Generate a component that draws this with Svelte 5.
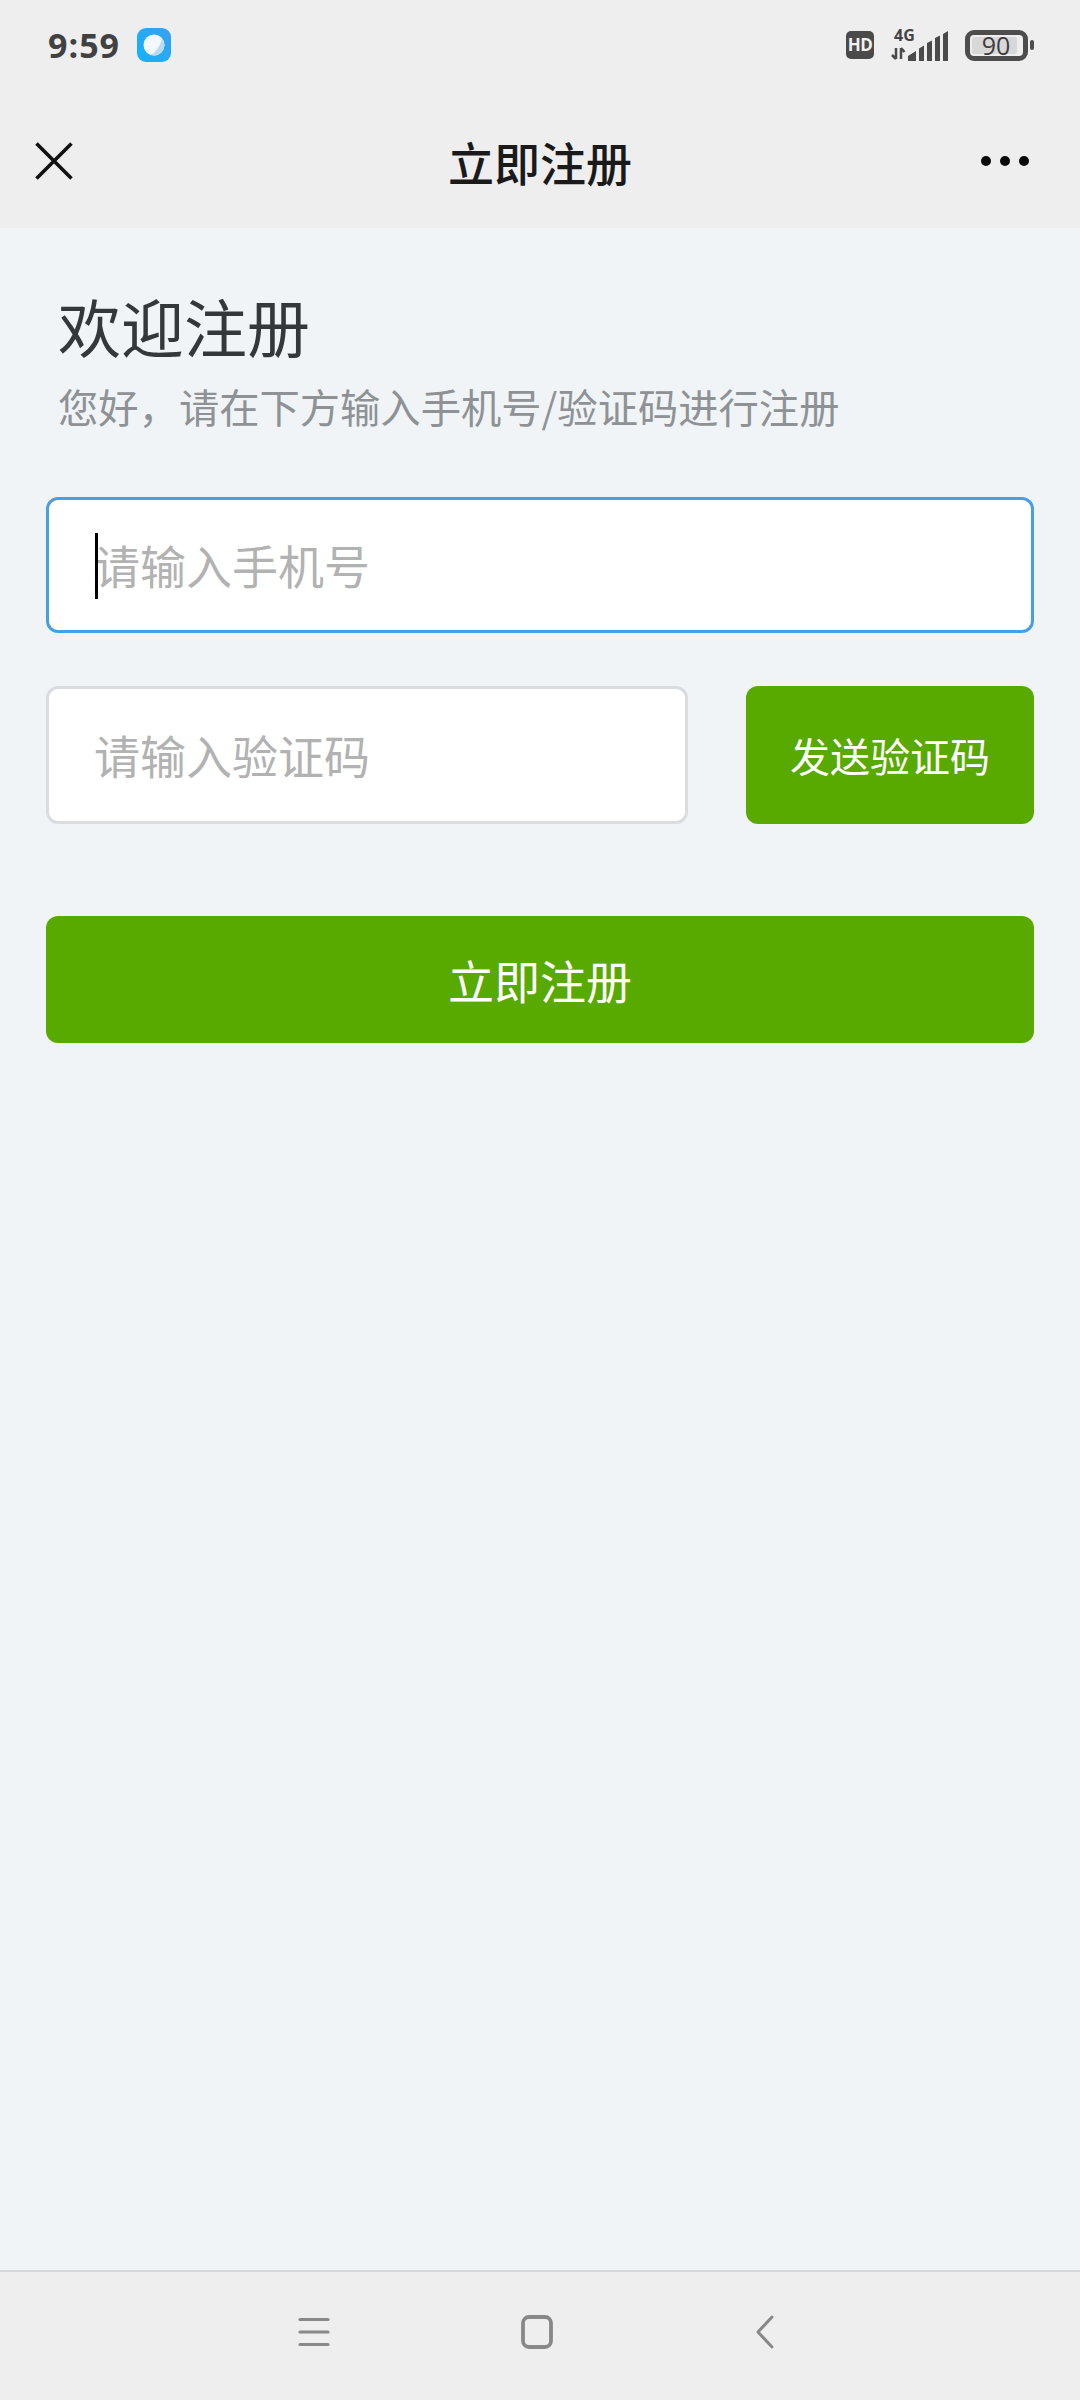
<script>
  const navTitle = '立即注册';
</script>

<div class="page">
  <header class="top">
    <div class="status">
      <div class="status-left">
        <span class="time">9:59</span>
        <svg class="app-icon" width="34" height="34" viewBox="0 0 34 34">
          <defs>
            <linearGradient id="appg" x1="0" y1="1" x2="1" y2="0">
              <stop offset="0" stop-color="#12b4fb" />
              <stop offset="1" stop-color="#3a9fee" />
            </linearGradient>
          </defs>
          <rect width="34" height="34" rx="9" fill="url(#appg)" />
          <circle cx="17" cy="17" r="10.5" fill="#f4f8fc" />
          <path d="M25 10.5 A10.5 10.5 0 0 1 14 27 Q22 22 25 10.5Z" fill="#b9dcf5" />
        </svg>
      </div>
      <div class="status-right">
        <div class="hd">HD</div>
        <div class="net">
          <span class="net-label">4G</span>
          <svg class="net-icon" width="58" height="31" viewBox="0 0 58 31">
            <path d="M5 18v11M5 29l-4-4M10 29V18M10 18l3.500 4" fill="none" stroke="#4a4a4a" stroke-width="2.500" />
            <path d="M17 31v-5l8-5v10zM28 31V18.500l5-3V31zM36 31V13l5-2.500V31zM44 31V8l5-2.500V31zM52 31V4l5-3v30z" fill="#4a4a4a" />
          </svg>
        </div>
        <div class="battery">
          <div class="battery-body"><div class="battery-fill"></div><span class="battery-num">90</span></div>
          <div class="battery-tip"></div>
        </div>
      </div>
    </div>
    <nav class="nav">
      <svg width="38" height="38" viewBox="0 0 38 38">
        <path d="M1.500 1.500L36.500 36.500M36.500 1.500L1.500 36.500" stroke="#111" stroke-width="3.600" fill="none" />
      </svg>
      <h1 class="nav-title">{navTitle}</h1>
      <svg class="more" width="48" height="10" viewBox="0 0 48 10">
        <circle cx="5" cy="5" r="5" fill="#0a0a0a" />
        <circle cx="24" cy="5" r="5" fill="#0a0a0a" />
        <circle cx="43" cy="5" r="5" fill="#0a0a0a" />
      </svg>
    </nav>
  </header>

  <main class="main">
    <h2 class="welcome">欢迎注册</h2>
    <p class="sub">您好，请在下方输入手机号/验证码进行注册</p>

    <div class="field active">
      <span class="caret"></span>
      <input type="text" placeholder="请输入手机号" />
    </div>

    <div class="code-row">
      <div class="field code">
        <input type="text" placeholder="请输入验证码" />
      </div>
      <button class="send">发送验证码</button>
    </div>

    <button class="submit">立即注册</button>
  </main>

  <footer class="bottom">
    <svg class="menu" width="32" height="30" viewBox="0 0 32 30">
      <path d="M2 2.500H30M2 15H30M2 27.500H30" stroke="#888" stroke-width="3.200" stroke-linecap="round" fill="none" />
    </svg>
    <svg class="home" width="32" height="34" viewBox="0 0 32 34">
      <rect x="2" y="2" width="28" height="30" rx="6" stroke="#888" stroke-width="3.800" fill="none" />
    </svg>
    <svg class="back" width="18" height="34" viewBox="0 0 18 34">
      <path d="M16 2L2 17L16 32" stroke="#888" stroke-width="3" stroke-linecap="round" stroke-linejoin="round" fill="none" />
    </svg>
  </footer>
</div>

<style>
  :global(body) {
    margin: 0;
    background: #f0f4f7;
    font-family: "Noto Sans CJK SC", "Noto Sans", sans-serif;
  }
  .page {
    width: 1080px;
    height: 2400px;
    display: flex;
    flex-direction: column;
    background: #f0f4f7;
  }
  .top {
    background: #eeeeee;
    height: 228px;
    flex: none;
  }
  .status {
    height: 90px;
    display: flex;
    justify-content: space-between;
    align-items: center;
    padding: 0 48px;
  }
  .status-left {
    display: flex;
    align-items: center;
    gap: 17px;
  }
  .time {
    font-family: "Open Sans", sans-serif;
    font-weight: 700;
    font-size: 34px;
    line-height: 40px;
    letter-spacing: 1px;
    color: #414141;
    width: 72px;
  }
  .status-right {
    display: flex;
    align-items: center;
    margin-right: -2px;
  }
  .hd {
    width: 28px;
    height: 28px;
    border-radius: 5px;
    background: #4a4a4a;
    color: #f2f2f2;
    font-family: "Open Sans", sans-serif;
    font-weight: 700;
    font-size: 17px;
    line-height: 28px;
    text-align: center;
    letter-spacing: -0.5px;
  }
  .net {
    margin-left: 17px;
    width: 58px;
    height: 31px;
    position: relative;
  }
  .net-icon {
    display: block;
  }
  .net-label {
    position: absolute;
    left: 3px;
    top: -4px;
    font-family: "Open Sans", sans-serif;
    font-weight: 700;
    font-size: 16px;
    line-height: 18px;
    color: #444;
  }
  .battery {
    margin-left: 16px;
    display: flex;
    align-items: center;
    gap: 2px;
  }
  .battery-body {
    box-sizing: border-box;
    position: relative;
    width: 63px;
    height: 31px;
    border: 5px solid #4d4d4d;
    border-radius: 9px;
    display: flex;
    align-items: center;
    justify-content: center;
  }
  .battery-fill {
    position: absolute;
    left: 2px;
    top: 2px;
    bottom: 2px;
    right: 6px;
    background: #d8d8d8;
    border-radius: 2px;
  }
  .battery-num {
    position: relative;
    margin-right: 1px;
    font-family: "Open Sans", sans-serif;
    font-size: 25px;
    line-height: 22px;
    color: #3e3e3e;
  }
  .battery-tip {
    width: 4px;
    height: 10px;
    background: #4d4d4d;
    border-radius: 2px;
  }
  .nav {
    height: 138px;
    box-sizing: border-box;
    display: grid;
    grid-template-columns: 1fr auto 1fr;
    align-items: center;
    padding: 4px 35px 0;
  }
  .more {
    justify-self: end;
    margin-right: 16px;
  }
  .nav-title {
    margin: 0;
    font-size: 46px;
    font-weight: 500;
    line-height: 60px;
    color: #1a1a1a;
  }
  .main {
    flex: 1;
    box-sizing: border-box;
    padding: 55px 46px 0;
  }
  .welcome {
    margin: 0 0 10px 12px;
    font-size: 63px;
    font-weight: 400;
    line-height: 84px;
    color: #33383b;
  }
  .sub {
    margin: 0 0 62px 12px;
    font-size: 40.3px;
    line-height: 58px;
    color: #8e9295;
    white-space: nowrap;
  }
  .field {
    box-sizing: border-box;
    position: relative;
    height: 136px;
    border: 3px solid #d9dde0;
    border-radius: 12px;
    background: #fff;
    display: flex;
    align-items: center;
    padding: 0 45px 3px;
  }
  .field.active {
    border-color: #48a0e4;
  }
  .caret {
    position: absolute;
    left: 46px;
    top: 33px;
    width: 3px;
    height: 66px;
    background: #000;
  }
  input {
    width: 100%;
    border: 0;
    outline: 0;
    padding: 0;
    background: transparent;
    font-family: "Noto Sans CJK SC", sans-serif;
    font-size: 46px;
    line-height: 64px;
    height: 64px;
  }
  input::placeholder {
    color: #b2b2b2;
    opacity: 1;
  }
  .code-row {
    display: flex;
    justify-content: space-between;
    margin-top: 53px;
  }
  .field.code {
    width: 642px;
    height: 138px;
  }
  button {
    border: 0;
    padding: 0;
    background: #58aa00;
    color: #fff;
    border-radius: 12px;
    font-family: "Noto Sans CJK SC", sans-serif;
    display: block;
  }
  .send {
    width: 288px;
    height: 138px;
    font-size: 40px;
  }
  .submit {
    width: 100%;
    height: 127px;
    margin-top: 92px;
    padding-bottom: 2px;
    font-size: 46px;
  }
  .bottom {
    flex: none;
    height: 130px;
    box-sizing: border-box;
    border-top: 2px solid #d3d8dc;
    background: #eeeeee;
    display: flex;
    align-items: center;
    padding: 0 0 8px 298px;
  }
  .home {
    margin-left: 191px;
  }
  .back {
    margin-left: 203px;
  }
</style>
